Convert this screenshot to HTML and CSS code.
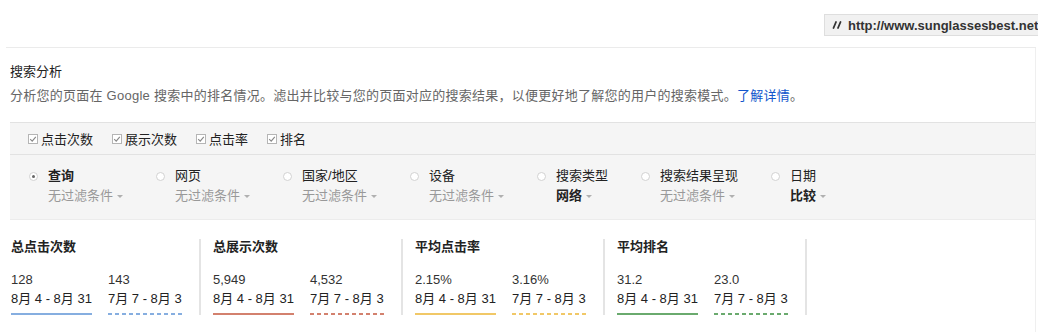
FILE: index.html
```html
<!DOCTYPE html>
<html lang="zh-CN">
<head>
    <meta charset="UTF-8">
    <title>搜索分析</title>
    <link rel="stylesheet" href="styles.css">
</head>
<body>
    <div id="topbar">
        <div class="url">
            <svg class="url-icon" width="10" height="8" viewBox="0 0 10 8"><path d="M4 1 L1.5 7 M8.5 1 L6 7" stroke="#333" stroke-width="1.8" stroke-linecap="round" fill="none"/></svg>
            <span>http://www.sunglassesbest.net</span>
        </div>
    </div>

    <div id="content">
        <div class="title">搜索分析</div>
        <div class="desc">分析您的页面在 Google 搜索中的排名情况。滤出并比较与您的页面对应的搜索结果，以便更好地了解您的用户的搜索模式。<a href="#">了解详情</a>。</div>

        <div class="filters">
            <div class="checks">
                <label class="check"><svg width="10" height="10" viewBox="0 0 10 10"><rect x="0.5" y="0.5" width="9" height="9" fill="#fff" stroke="#b5b5b5"/><path d="M2.2 5.2 L4.2 7.2 L7.8 2.8" stroke="#888" stroke-width="1.1" fill="none"/></svg>点击次数</label>
                <label class="check"><svg width="10" height="10" viewBox="0 0 10 10"><rect x="0.5" y="0.5" width="9" height="9" fill="#fff" stroke="#b5b5b5"/><path d="M2.2 5.2 L4.2 7.2 L7.8 2.8" stroke="#888" stroke-width="1.1" fill="none"/></svg>展示次数</label>
                <label class="check"><svg width="10" height="10" viewBox="0 0 10 10"><rect x="0.5" y="0.5" width="9" height="9" fill="#fff" stroke="#b5b5b5"/><path d="M2.2 5.2 L4.2 7.2 L7.8 2.8" stroke="#888" stroke-width="1.1" fill="none"/></svg>点击率</label>
                <label class="check"><svg width="10" height="10" viewBox="0 0 10 10"><rect x="0.5" y="0.5" width="9" height="9" fill="#fff" stroke="#b5b5b5"/><path d="M2.2 5.2 L4.2 7.2 L7.8 2.8" stroke="#888" stroke-width="1.1" fill="none"/></svg>排名</label>
            </div>
            <div class="dims">
                <div class="dim">
                    <span class="radio on"></span>
                    <div>
                        <div class="dim-name bold">查询</div>
                        <div class="dim-val">无过滤条件<span class="caret"></span></div>
                    </div>
                </div>
                <div class="dim">
                    <span class="radio"></span>
                    <div>
                        <div class="dim-name">网页</div>
                        <div class="dim-val">无过滤条件<span class="caret"></span></div>
                    </div>
                </div>
                <div class="dim">
                    <span class="radio"></span>
                    <div>
                        <div class="dim-name">国家/地区</div>
                        <div class="dim-val">无过滤条件<span class="caret"></span></div>
                    </div>
                </div>
                <div class="dim">
                    <span class="radio"></span>
                    <div>
                        <div class="dim-name">设备</div>
                        <div class="dim-val">无过滤条件<span class="caret"></span></div>
                    </div>
                </div>
                <div class="dim">
                    <span class="radio"></span>
                    <div>
                        <div class="dim-name">搜索类型</div>
                        <div class="dim-val set">网络<span class="caret"></span></div>
                    </div>
                </div>
                <div class="dim">
                    <span class="radio"></span>
                    <div>
                        <div class="dim-name">搜索结果呈现</div>
                        <div class="dim-val">无过滤条件<span class="caret"></span></div>
                    </div>
                </div>
                <div class="dim">
                    <span class="radio"></span>
                    <div>
                        <div class="dim-name">日期</div>
                        <div class="dim-val set">比较<span class="caret"></span></div>
                    </div>
                </div>
            </div>
        </div>

        <div class="metrics">
            <div class="metric clicks">
                <div class="metric-title">总点击次数</div>
                <div class="pair">
                    <div class="period"><div>128</div><div class="range">8月 4 - 8月 31</div></div>
                    <div class="period prev"><div>143</div><div class="range">7月 7 - 8月 3</div></div>
                </div>
            </div>
            <div class="metric impressions">
                <div class="metric-title">总展示次数</div>
                <div class="pair">
                    <div class="period"><div>5,949</div><div class="range">8月 4 - 8月 31</div></div>
                    <div class="period prev"><div>4,532</div><div class="range">7月 7 - 8月 3</div></div>
                </div>
            </div>
            <div class="metric ctr">
                <div class="metric-title">平均点击率</div>
                <div class="pair">
                    <div class="period"><div>2.15%</div><div class="range">8月 4 - 8月 31</div></div>
                    <div class="period prev"><div>3.16%</div><div class="range">7月 7 - 8月 3</div></div>
                </div>
            </div>
            <div class="metric position">
                <div class="metric-title">平均排名</div>
                <div class="pair">
                    <div class="period"><div>31.2</div><div class="range">8月 4 - 8月 31</div></div>
                    <div class="period prev"><div>23.0</div><div class="range">7月 7 - 8月 3</div></div>
                </div>
            </div>
        </div>
    </div>
</body>
</html>
```

FILE: styles.css
```css
body {
    margin: 0;
    font-family: "Liberation Sans", "Noto Sans CJK SC", sans-serif;
    font-size: 13px;
    color: #222;
    background-color: #fff;
    overflow: hidden;
}

#topbar {
    height: 48px;
    margin-left: 6px;
    margin-right: 2px;
    border-bottom: 1px solid #ebebeb;
    box-sizing: border-box;
    padding-left: 818px;
    padding-top: 14px;
}

.url {
    display: flex;
    align-items: center;
    width: 240px;
    height: 22px;
    box-sizing: border-box;
    padding-left: 7px;
    background-color: #f1f1f1;
    border: 1px solid #dedede;
    font-weight: bold;
    font-size: 13px;
    color: #333;
    white-space: nowrap;
    overflow: hidden;
}

.url-icon {
    margin-right: 6px;
}

#content {
    padding-left: 10px;
    margin-right: 2px;
    border-right: 1px solid #efefef;
    height: 284px;
}

.title {
    padding-top: 16px;
    line-height: 16px;
    color: #222;
}

.desc {
    margin-top: 8px;
    line-height: 16px;
    color: #666;
    letter-spacing: 0.25px;
}

.desc a {
    color: #1155cc;
    text-decoration: none;
}

.filters {
    margin-top: 18px;
    background-color: #f5f5f5;
    border-top: 1px solid #e2e2e2;
    border-bottom: 1px solid #ececec;
}

.checks {
    display: flex;
    gap: 19px;
    height: 31px;
    align-items: center;
    padding-left: 18px;
    border-bottom: 1px solid #e2e2e2;
}

.check {
    display: flex;
    align-items: center;
    color: #222;
}

.check svg {
    margin-right: 3px;
}

.dims {
    display: flex;
    padding: 11px 0 13px 19px;
}

.dim {
    display: flex;
    margin-right: 33px;
}

.radio {
    width: 9px;
    height: 9px;
    box-sizing: border-box;
    border: 1px solid #d2d2d2;
    border-radius: 50%;
    background-color: #fff;
    margin-top: 6px;
    margin-right: 10px;
    position: relative;
}

.radio.on::after {
    content: "";
    position: absolute;
    left: 2px;
    top: 2px;
    width: 3px;
    height: 3px;
    border-radius: 50%;
    background-color: #666;
}

.dim-name {
    line-height: 20px;
    color: #222;
}

.dim-val {
    line-height: 20px;
    color: #999;
}

.bold, .dim-val.set {
    font-weight: bold;
    color: #222;
}

.caret {
    display: inline-block;
    vertical-align: middle;
    margin-left: 4px;
    border-left: 3px solid transparent;
    border-right: 3px solid transparent;
    border-top: 3px solid #b0b0b0;
}

.metrics {
    display: flex;
    margin-top: 19px;
}

.metric {
    width: 188px;
    margin-right: 11px;
    border-right: 2px solid #e4e4e4;
    padding-top: 0;
    height: 76px;
    padding-left: 1px;
}

.metric-title {
    font-weight: bold;
    line-height: 16px;
}

.pair {
    display: grid;
    grid-template-columns: 97px auto;
    margin-top: 15px;
}

.period {
    justify-self: start;
    line-height: 19px;
    color: #333;
    padding-bottom: 5px;
    border-bottom: 2px solid;
}

.range {
    color: #222;
}

.period.prev {
    border-bottom: none;
    padding-bottom: 7px;
    background-position: left bottom;
    background-size: 7px 2px;
    background-repeat: repeat-x;
}

.clicks .period { border-color: #86aee0; }
.impressions .period { border-color: #d3816e; }
.ctr .period { border-color: #f1c867; }
.position .period { border-color: #6aaa6e; }

.clicks .period.prev { background-image: linear-gradient(90deg, #86aee0 4px, transparent 4px); }
.impressions .period.prev { background-image: linear-gradient(90deg, #d3816e 4px, transparent 4px); }
.ctr .period.prev { background-image: linear-gradient(90deg, #f1c867 4px, transparent 4px); }
.position .period.prev { background-image: linear-gradient(90deg, #6aaa6e 4px, transparent 4px); }
```
